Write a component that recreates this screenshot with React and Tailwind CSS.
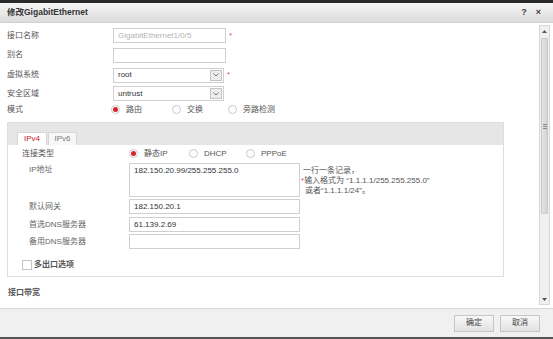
import React from 'react';

const font = { fontFamily: '"Liberation Sans", "Noto Sans CJK SC", sans-serif' };

function Radio({ checked, label, width }) {
  return (
    <div className={`flex items-center ${width}`}>
      <span className="flex h-[9px] w-[9px] items-center justify-center rounded-full border border-[#c8c8c8] bg-white">
        {checked && <span className="h-[5px] w-[5px] rounded-full bg-[#d0262d]" />}
      </span>
      <span className="ml-[6px] text-[#555]">{label}</span>
    </div>
  );
}

function TextBox({ value, disabled, className = '' }) {
  return (
    <div
      className={`flex h-[15px] w-[113px] items-center border border-[#cfcfcf] bg-white px-[4px] ${
        disabled ? 'text-[#b4b4b4]' : 'text-[#333]'
      } ${className}`}
    >
      {value}
    </div>
  );
}

function SelectBox({ value }) {
  return (
    <div className="flex h-[15px] w-[111px] items-center justify-between border border-[#cfcfcf] bg-white pl-[4px] pr-[1px] text-[#333]">
      <span>{value}</span>
      <span className="flex h-[11px] w-[12px] items-center justify-center border border-[#c4c4c4] bg-[#ececec]">
        <svg width="6" height="4" viewBox="0 0 6 4">
          <path d="M0.5 0.5 L3 3 L5.5 0.5" fill="none" stroke="#777" strokeWidth="1" />
        </svg>
      </span>
    </div>
  );
}

const Star = () => <span className="ml-[3px] text-[#e05050]">*</span>;

export default function App() {
  return (
    <div className="flex h-[339px] w-[553px] flex-col overflow-hidden bg-white text-[8px] leading-none" style={font}>
      {/* top strip */}
      <div className="h-[3px] bg-[#2b2b2b]" />

      {/* title bar */}
      <div className="flex h-[20px] items-center justify-between border-b border-[#d0d0d0] bg-gradient-to-b from-[#f6f6f6] to-[#dcdcdc] pl-[7px] pr-[12px]">
        <span className="text-[8.5px] font-bold text-[#333]">修改GigabitEthernet</span>
        <div className="flex items-center gap-[9px] text-[9px] font-bold text-[#444]">
          <span>?</span>
          <span>×</span>
        </div>
      </div>

      {/* body */}
      <div className="flex flex-1">
        <div className="flex-1 pl-[7px] pt-[3px] pr-[35px]">
          <div className="flex h-[19px] items-center">
            <span className="w-[106px] text-[#555]">接口名称</span>
            <TextBox value="GigabitEthernet1/0/5" disabled />
            <Star />
          </div>
          <div className="flex h-[20px] items-center">
            <span className="w-[106px] text-[#555]">别名</span>
            <TextBox value="" />
          </div>
          <div className="flex h-[20px] items-center">
            <span className="w-[106px] text-[#555]">虚拟系统</span>
            <SelectBox value="root" />
            <Star />
          </div>
          <div className="flex h-[17px] items-center">
            <span className="w-[106px] text-[#555]">安全区域</span>
            <SelectBox value="untrust" />
          </div>
          <div className="flex h-[15px] items-center">
            <span className="w-[104px] text-[#555]">模式</span>
            <Radio checked label="路由" width="w-[61px]" />
            <Radio label="交换" width="w-[56px]" />
            <Radio label="旁路检测" width="w-[70px]" />
          </div>

          {/* IPv4 / IPv6 panel */}
          <div className="mt-[5px] flex h-[155px] flex-col border border-[#dedede]">
            <div className="flex h-[22px] items-end bg-[#e6e6e6] pl-[9px]">
              <div className="flex h-[13px] w-[30px] items-center justify-center border border-b-0 border-[#d6d6d6] bg-white text-[#c8171e]">
                IPv4
              </div>
              <div className="ml-[1px] flex h-[13px] w-[29px] items-center justify-center border border-b-0 border-[#d6d6d6] bg-[#f7f7f7] text-[#777]">
                IPv6
              </div>
            </div>
            <div className="flex-1 pl-[14px]">
              <div className="flex h-[17px] items-center">
                <span className="w-[107px] text-[#555]">连接类型</span>
                <Radio checked label="静态IP" width="w-[60px]" />
                <Radio label="DHCP" width="w-[57px]" />
                <Radio label="PPPoE" width="w-[60px]" />
              </div>
              <div className="mt-[1px] flex">
                <span className="w-[107px] pl-[7px] pt-[3px] text-[#666]">IP地址</span>
                <div className="h-[34px] w-[171px] border border-[#cfcfcf] px-[4px] pt-[3px] text-[#333]">
                  182.150.20.99/255.255.255.0
                </div>
                <div className="ml-[3px] flex flex-col gap-[2px] pt-[4px] text-[#555]">
                  <span>一行一条记录，</span>
                  <span className="-ml-[2px]">
                    <span className="text-[#e05050]">*</span>输入格式为 “1.1.1.1/255.255.255.0”
                  </span>
                  <span className="ml-[2px]">或者“1.1.1.1/24”。</span>
                </div>
              </div>
              <div className="mt-[2px] flex items-center">
                <span className="w-[107px] pl-[7px] text-[#666]">默认网关</span>
                <TextBox value="182.150.20.1" className="w-[171px]" />
              </div>
              <div className="mt-[3px] flex items-center">
                <span className="w-[107px] pl-[7px] text-[#666]">首选DNS服务器</span>
                <TextBox value="61.139.2.69" className="w-[171px]" />
              </div>
              <div className="mt-[2px] flex items-center">
                <span className="w-[107px] pl-[7px] text-[#666]">备用DNS服务器</span>
                <TextBox value="" className="w-[171px]" />
              </div>
              <div className="mt-[11px] flex items-center">
                <span className="h-[10px] w-[10px] border border-[#c4c4c4] bg-white" />
                <span className="ml-[2px] font-bold text-[#555]">多出口选项</span>
              </div>
            </div>
          </div>

          <div className="mt-[12px] pl-[1px] font-bold text-[#555]">接口带宽</div>
        </div>

        {/* scrollbar */}
        <div className="mr-[3px] mt-[2px] mb-[3px] flex w-[11px] flex-col border border-[#d8d8d8] bg-[#f0f0f0]">
          <div className="flex h-[10px] items-center justify-center">
            <svg width="5" height="3" viewBox="0 0 5 3">
              <path d="M0 3 L2.5 0 L5 3 Z" fill="#555" />
            </svg>
          </div>
          <div className="mx-[1px] mt-[2px] flex h-[176px] items-center justify-center rounded-[1px] border border-[#c8c8c8] bg-gradient-to-r from-[#e4e4e4] to-[#d4d4d4]">
            <div className="flex flex-col gap-[1px]">
              <span className="h-px w-[4px] bg-[#888]" />
              <span className="h-px w-[4px] bg-[#888]" />
              <span className="h-px w-[4px] bg-[#888]" />
            </div>
          </div>
          <div className="flex-1" />
          <div className="flex h-[10px] items-center justify-center">
            <svg width="5" height="3" viewBox="0 0 5 3">
              <path d="M0 0 L2.5 3 L5 0 Z" fill="#555" />
            </svg>
          </div>
        </div>
      </div>

      {/* footer */}
      <div className="flex h-[29px] items-center justify-end gap-[6px] border-t border-[#d6d6d6] bg-[#f0f0f0] pr-[13px]">
        <button className="flex h-[17px] w-[40px] items-center justify-center border border-[#c6c6c6] bg-gradient-to-b from-[#f8f8f8] to-[#e2e2e2] text-[#444]">
          确定
        </button>
        <button className="flex h-[17px] w-[40px] items-center justify-center border border-[#c6c6c6] bg-gradient-to-b from-[#f8f8f8] to-[#e2e2e2] text-[#444]">
          取消
        </button>
      </div>
      <div className="h-[2px] bg-[#555]" />
    </div>
  );
}
